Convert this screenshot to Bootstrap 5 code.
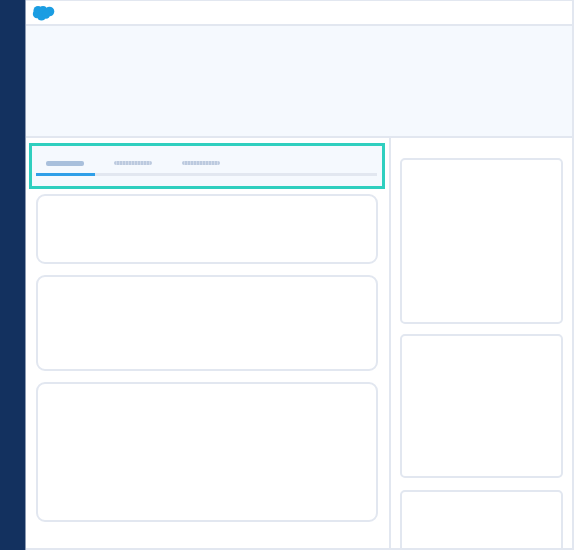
<!DOCTYPE html>
<html lang="en">
<head>
    <meta charset="UTF-8">
    <meta name="viewport" content="width=device-width, initial-scale=1.0">
    <title>Record page</title>
    <link href="https://cdn.jsdelivr.net/npm/bootstrap@5.3.0/dist/css/bootstrap.min.css" rel="stylesheet">
    <style>
        html, body { height: 100%; }
        body { background: #fff; overflow: hidden; font-family: "Liberation Sans", sans-serif; }
        .app-shell { width: 574px; height: 550px; }
        .side-rail { width: 26px; background: #13315f; border-right: 1px solid #8c9bb3; }
        .app-main { width: 548px; border-top: 1px solid #e2e7f0; border-right: 2px solid #e2e7f0; border-bottom: 2px solid #e2e7f0; }
        .top-bar { height: 25px; padding: 0 0 0 6px; border-bottom: 2px solid #e2e7f0; }
        .banner-area { height: 112px; background: #f5f9fe; border-bottom: 2px solid #e2e7f0; flex: none; }
        .left-pane { width: 365px; border-right: 2px solid #e2e7f0; padding: 5px 4px 0 3px; }
        .right-pane { padding: 20px 9px 0 9px; gap: 10px; }
        .tab-box { height: 46px; border: 3px solid #2fcfbf; background: #f5f9fe; padding: 14px 5px 0 4px; }
        .tab-row { height: 6px; padding-left: 10px; gap: 30px; }
        .tab-blob { width: 38px; height: 4px; border-radius: 2px; background: repeating-linear-gradient(90deg, #bccadf 0 2px, #d3dcea 2px 3px); }
        .tab-blob.is-active { background: #a9c0dc; height: 5px; }
        .tab-track { height: 3px; margin-top: 7px; background: #e2e7f0; }
        .tab-fill { width: 59px; height: 3px; background: #2f9fe8; }
        .left-cards { padding: 5px 7px 0 7px; gap: 11px; }
        .panel-box { background: #fff; border: 2px solid #e2e7f0; border-radius: 9px; flex: none; }
        .side-box { background: #fff; border: 2px solid #e2e7f0; border-radius: 5px; flex: none; }
        .side-box-last { margin-top: 2px; }
        .h-70 { height: 70px; }
        .h-96 { height: 96px; }
        .h-140 { height: 140px; }
        .h-166 { height: 166px; }
        .h-144 { height: 144px; }
        .h-80 { height: 80px; }
    </style>
</head>
<body>
    <div class="app-shell d-flex">
        <div class="side-rail flex-shrink-0"></div>
        <div class="app-main d-flex flex-column">
            <div class="top-bar d-flex align-items-center flex-shrink-0">
                <!-- cloud logo -->
                <svg width="23" height="16" viewBox="0 0 23 16" fill="#1b9de2">
                    <circle cx="6" cy="5.5" r="4.5"/>
                    <circle cx="11" cy="5" r="4"/>
                    <circle cx="17.5" cy="6.5" r="4.8"/>
                    <circle cx="5" cy="9" r="4.2"/>
                    <circle cx="9.5" cy="11" r="4.5"/>
                    <circle cx="14" cy="9.5" r="4.2"/>
                </svg>
            </div>
            <div class="banner-area"></div>
            <div class="d-flex flex-grow-1 overflow-hidden">
                <div class="left-pane flex-shrink-0">
                    <div class="tab-box">
                        <div class="tab-row d-flex align-items-center">
                            <div class="tab-blob is-active"></div>
                            <div class="tab-blob"></div>
                            <div class="tab-blob"></div>
                        </div>
                        <div class="tab-track"><div class="tab-fill"></div></div>
                    </div>
                    <div class="left-cards d-flex flex-column">
                        <div class="panel-box h-70"></div>
                        <div class="panel-box h-96"></div>
                        <div class="panel-box h-140"></div>
                    </div>
                </div>
                <div class="right-pane flex-grow-1 d-flex flex-column">
                    <div class="side-box h-166"></div>
                    <div class="side-box h-144"></div>
                    <div class="side-box side-box-last h-80"></div>
                </div>
            </div>
        </div>
    </div>
    <script src="https://cdn.jsdelivr.net/npm/bootstrap@5.3.0/dist/js/bootstrap.bundle.min.js"></script>
</body>
</html>
